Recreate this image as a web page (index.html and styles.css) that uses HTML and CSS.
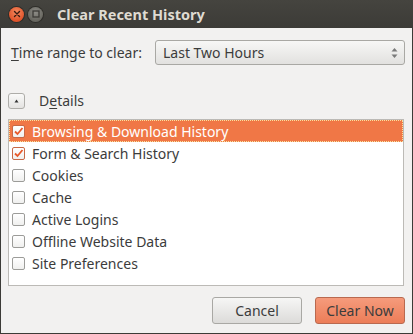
FILE: index.html
```html
<!DOCTYPE html>
<html>
<head>
    <title>Clear Recent History</title>
    <link rel="stylesheet" href="styles.css">
</head>
<body>
    <div class="window">
        <div class="titlebar">
            <span class="win-btn close">
                <svg width="8" height="8" viewBox="0 0 8 8"><path d="M1.5 1.5 L6.5 6.5 M6.5 1.5 L1.5 6.5" stroke="#3a1a10" stroke-width="1.4" stroke-linecap="round"/></svg>
            </span>
            <span class="win-btn maximize">
                <svg width="8" height="8" viewBox="0 0 8 8"><rect x="1" y="1" width="6" height="6" fill="none" stroke="#3c3b37" stroke-width="1.3"/></svg>
            </span>
            <span class="title">Clear Recent History</span>
        </div>

        <div class="content">
            <div class="range-row">
                <label class="range-label"><u>T</u>ime range to clear:</label>
                <div class="select">
                    <span>Last Two Hours</span>
                    <svg class="arrows" width="7" height="12" viewBox="0 0 7 12">
                        <path d="M3.5 1 L6.5 4.5 L0.5 4.5 Z" fill="#7a7a7a"/>
                        <path d="M3.5 11 L6.5 7.5 L0.5 7.5 Z" fill="#7a7a7a"/>
                    </svg>
                </div>
            </div>

            <div class="details-row">
                <span class="expander">
                    <svg width="5" height="4" viewBox="0 0 5 4"><path d="M2.5 0.5 L4.5 3.5 L0.5 3.5 Z" fill="#333"/></svg>
                </span>
                <span class="details-label">D<u>e</u>tails</span>
            </div>

            <div class="list">
                <div class="item selected">
                    <span class="check checked"><svg width="11" height="11" viewBox="0 0 11 11"><path d="M2 5.5 L4.5 8 L9.5 2" fill="none" stroke="#e8592a" stroke-width="1.8"/></svg></span>
                    Browsing &amp; Download History
                </div>
                <div class="item">
                    <span class="check checked"><svg width="11" height="11" viewBox="0 0 11 11"><path d="M2 5.5 L4.5 8 L9.5 2" fill="none" stroke="#e8592a" stroke-width="1.8"/></svg></span>
                    Form &amp; Search History
                </div>
                <div class="item"><span class="check"></span>Cookies</div>
                <div class="item"><span class="check"></span>Cache</div>
                <div class="item"><span class="check"></span>Active Logins</div>
                <div class="item"><span class="check"></span>Offline Website Data</div>
                <div class="item"><span class="check"></span>Site Preferences</div>
            </div>

            <div class="buttons">
                <button class="btn">Cancel</button>
                <button class="btn primary">Clear Now</button>
            </div>
        </div>
    </div>
</body>
</html>
```

FILE: styles.css
```css
body {
    margin: 0;
    font-family: "Noto Sans", "Open Sans", sans-serif;
    color: #3c3c3c;
}

u {
    text-decoration-thickness: 1px;
    text-underline-offset: 2px;
}

.window {
    width: 413px;
    height: 334px;
    box-sizing: border-box;
    background-color: #f2f1f0;
    border: 1px solid #3c3b37;
    border-top: none;
    display: flex;
    flex-direction: column;
}

.titlebar {
    height: 28px;
    flex: none;
    background: linear-gradient(#45443f, #3c3b37);
    display: flex;
    align-items: center;
    padding-left: 9px;
    margin: 0 -1px;
}

.win-btn {
    width: 15px;
    height: 15px;
    border-radius: 50%;
    display: flex;
    align-items: center;
    justify-content: center;
    margin-right: 4px;
}

.close {
    background: radial-gradient(circle at 50% 35%, #f58a5f, #e0532a 70%);
    box-shadow: 0 0 0 1px #2e2d29;
}

.maximize {
    background: radial-gradient(circle at 50% 35%, #8c8b86, #67665f 70%);
    box-shadow: 0 0 0 1px #2e2d29;
}

.title {
    margin-left: 10px;
    font-weight: bold;
    font-size: 14.5px;
    color: #dfdbd2;
}

.content {
    flex: 1;
    display: flex;
    flex-direction: column;
    padding: 12px 7px 9px 7px;
}

.range-row {
    display: flex;
    align-items: center;
    font-size: 14px;
}

.range-label {
    margin-left: 3px;
    width: 144px;
}

.select {
    flex: 1;
    height: 25px;
    box-sizing: border-box;
    border: 1px solid #a9a8a4;
    border-radius: 3px;
    background: linear-gradient(#f7f7f6, #e2e1df);
    display: flex;
    align-items: center;
    justify-content: space-between;
    padding: 0 6px 0 7px;
}

.details-row {
    display: flex;
    align-items: center;
    margin-top: 26px;
    font-size: 14px;
}

.expander {
    width: 17px;
    height: 16px;
    box-sizing: border-box;
    border: 1px solid #aeada9;
    border-radius: 3px;
    background: linear-gradient(#fafaf9, #e4e3e1);
    display: flex;
    align-items: center;
    justify-content: center;
}

.details-label {
    margin-left: 14px;
}

.list {
    margin-top: 9px;
    height: 167px;
    box-sizing: border-box;
    background-color: white;
    border: 1px solid #bcbab6;
    font-size: 14px;
    margin-right: 1px;
}

.item {
    height: 22px;
    display: flex;
    align-items: center;
    padding-left: 3px;
    color: #3c3c3c;
}

.item.selected {
    background-color: #f07746;
    color: white;
    outline: 1px dotted #f9e3a0;
    outline-offset: -1px;
}

.check {
    width: 13px;
    height: 13px;
    box-sizing: border-box;
    border: 1px solid #9c9c99;
    border-radius: 2px;
    background: linear-gradient(#ffffff, #f0f0ef);
    margin-right: 7px;
    display: flex;
    align-items: center;
    justify-content: center;
}

.check.checked {
    border-color: #c76a48;
}

.buttons {
    margin-top: auto;
    display: flex;
    justify-content: flex-end;
    gap: 13px;
}

.btn {
    width: 90px;
    height: 27px;
    font-family: inherit;
    font-size: 14px;
    color: #3c3c3c;
    border: 1px solid #a9a8a4;
    border-radius: 3px;
    background: linear-gradient(#f6f6f5, #dcdbd9);
}

.btn.primary {
    color: #3c3c3c;
    border-color: #b9694f;
    background: linear-gradient(#f59b7c, #ec7d58);
}
```
